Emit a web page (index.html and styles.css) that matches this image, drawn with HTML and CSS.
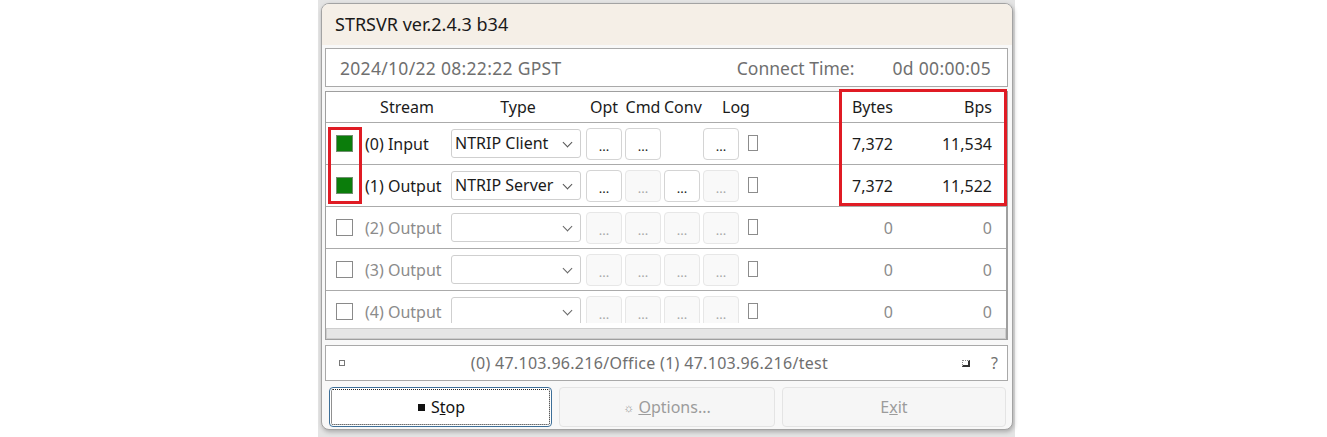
FILE: index.html
```html
<!DOCTYPE html>
<html>

<head>
    <title>STRSVR</title>
    <link rel="stylesheet" href="styles.css">
</head>

<body>
    <div class="desk">
        <div class="win">
            <div class="titlebar">STRSVR ver.2.4.3 b34</div>

            <div class="content">
                <div class="panel time-panel">
                    <span class="time">2024/10/22 08:22:22 GPST</span>
                    <span class="conn-label">Connect Time:</span>
                    <span class="conn-value">0d 00:00:05</span>
                </div>

                <div class="streams">
                    <div class="rows">
                        <div class="row head">
                            <span></span>
                            <span class="h-stream">Stream</span>
                            <span class="h-type">Type</span>
                            <span class="h-btn">Opt</span>
                            <span class="h-btn">Cmd</span>
                            <span class="h-btn">Conv</span>
                            <span class="h-log">Log</span>
                            <span></span>
                            <span class="num">Bytes</span>
                            <span class="num">Bps</span>
                        </div>

                        <div class="row">
                            <span class="chk on"></span>
                            <span class="label">(0) Input</span>
                            <div class="sel">NTRIP Client<i class="chev"></i></div>
                            <button class="dots">...</button>
                            <button class="dots">...</button>
                            <span></span>
                            <button class="dots">...</button>
                            <span class="logbox"></span>
                            <span class="num">7,372</span>
                            <span class="num">11,534</span>
                        </div>

                        <div class="row">
                            <span class="chk on"></span>
                            <span class="label">(1) Output</span>
                            <div class="sel">NTRIP Server<i class="chev"></i></div>
                            <button class="dots">...</button>
                            <button class="dots" disabled>...</button>
                            <button class="dots">...</button>
                            <button class="dots" disabled>...</button>
                            <span class="logbox"></span>
                            <span class="num">7,372</span>
                            <span class="num">11,522</span>
                        </div>

                        <div class="row off">
                            <span class="chk"></span>
                            <span class="label">(2) Output</span>
                            <div class="sel"><i class="chev"></i></div>
                            <button class="dots" disabled>...</button>
                            <button class="dots" disabled>...</button>
                            <button class="dots" disabled>...</button>
                            <button class="dots" disabled>...</button>
                            <span class="logbox"></span>
                            <span class="num">0</span>
                            <span class="num">0</span>
                        </div>

                        <div class="row off">
                            <span class="chk"></span>
                            <span class="label">(3) Output</span>
                            <div class="sel"><i class="chev"></i></div>
                            <button class="dots" disabled>...</button>
                            <button class="dots" disabled>...</button>
                            <button class="dots" disabled>...</button>
                            <button class="dots" disabled>...</button>
                            <span class="logbox"></span>
                            <span class="num">0</span>
                            <span class="num">0</span>
                        </div>

                        <div class="row off">
                            <span class="chk"></span>
                            <span class="label">(4) Output</span>
                            <div class="sel"><i class="chev"></i></div>
                            <button class="dots" disabled>...</button>
                            <button class="dots" disabled>...</button>
                            <button class="dots" disabled>...</button>
                            <button class="dots" disabled>...</button>
                            <span class="logbox"></span>
                            <span class="num">0</span>
                            <span class="num">0</span>
                        </div>
                    </div>
                    <div class="hscroll"></div>
                </div>

                <div class="panel status-panel">
                    <div class="st-left"><span class="tiny-box"></span></div>
                    <div class="st-text">(0) 47.103.96.216/Office (1) 47.103.96.216/test</div>
                    <div class="st-right">
                        <span class="dot-box"></span>
                        <span class="help">?</span>
                    </div>
                </div>

                <div class="buttons">
                    <button class="big focus"><span class="stop-ico"></span>S<u>t</u>op</button>
                    <button class="big" disabled><span class="opt-ico">&#9788;</span> <u>O</u>ptions...</button>
                    <button class="big" disabled>E<u>x</u>it</button>
                </div>
            </div>

            <!-- red highlight frames -->
            <div class="mark mark-check"></div>
            <div class="mark mark-bytes"></div>
        </div>
    </div>
</body>

</html>
```

FILE: styles.css
```css
body {
    margin: 0;
    padding: 0;
    background-color: white;
    font-family: "Noto Sans", "Open Sans", sans-serif;
    font-size: 16px;
    color: #1b1b1b;
}

.desk {
    margin-left: 318px;
    width: 697px;
    height: 437px;
    padding: 3px 2px 0 3px;
    box-sizing: border-box;
    background-color: #e4e4e4;
}

.win {
    position: relative;
    width: 692px;
    height: 427px;
    box-sizing: border-box;
    border: 1px solid #a3a3a3;
    border-radius: 8px;
    background-color: #f8f8f8;
    overflow: hidden;
    box-shadow: 1px 2px 4px rgba(0, 0, 0, 0.25);
}

.titlebar {
    height: 41px;
    line-height: 41px;
    padding-left: 13px;
    background-color: #f5efe7;
    font-size: 18px;
    color: #1a1a1a;
}

.content {
    padding: 3px 4px 0 3px;
}

.panel {
    background-color: white;
    border: 1px solid #a9a9a9;
    box-sizing: border-box;
    color: #6f6f6f;
}

.time-panel {
    height: 39px;
    display: flex;
    align-items: center;
    padding: 0 16px 0 14px;
    font-size: 17.5px;
}

.time {
    flex: 1;
    letter-spacing: 0.3px;
}

.conn-value {
    margin-left: 38px;
    letter-spacing: 0.35px;
}

/* stream table */
.streams {
    margin-top: 4px;
    height: 249px;
    box-sizing: border-box;
    border: 1px solid #9f9f9f;
    border-right-width: 2px;
    background-color: white;
}

.rows {
    height: 231px;
    overflow: hidden;
}

.row {
    display: grid;
    grid-template-columns: 37px 88px 135px 39px 39px 39px 45px 52px 93px 99px;
    align-items: center;
    height: 41px;
    border-bottom: 1px solid #ababab;
}

.row.head {
    height: 30px;
}

.h-stream {
    text-align: center;
}

.h-type {
    width: 130px;
    text-align: center;
    padding-left: 2px;
}

.h-btn {
    width: 36px;
    text-align: center;
}

.h-log {
    padding-left: 19px;
}

.num {
    text-align: right;
}

.chk {
    width: 17px;
    height: 17px;
    margin-left: 10px;
    box-sizing: border-box;
    border: 1px solid #8a8a8a;
    background-color: white;
}

.chk.on {
    border-color: #6f8f6f;
    background-color: #0b7d0b;
}

.label {
    padding-left: 2px;
    white-space: nowrap;
}

.sel {
    position: relative;
    width: 130px;
    height: 29px;
    box-sizing: border-box;
    border: 1px solid #cfcfcf;
    border-radius: 3px;
    padding-left: 3px;
    line-height: 26px;
    background-color: white;
    white-space: nowrap;
}

.chev {
    position: absolute;
    right: 9px;
    top: 9px;
    width: 6px;
    height: 6px;
    border-right: 1px solid #555;
    border-bottom: 1px solid #555;
    transform: rotate(45deg);
}

.dots {
    width: 36px;
    height: 32px;
    padding: 4px 0 0 0;
    box-sizing: border-box;
    border: 1px solid #d4d4d4;
    border-radius: 4px;
    background-color: white;
    font-family: "Noto Sans", sans-serif;
    font-size: 13px;
    color: #1b1b1b;
}

.dots:disabled {
    background-color: #f9f9f9;
    border-color: #e7e7e7;
    color: #a8a8a8;
}

.logbox {
    width: 10px;
    height: 16px;
    box-sizing: border-box;
    border: 1px solid #8c8c8c;
    margin-top: -2px;
}

.row.off {
    color: #8b8b8b;
}

.row.off .chev {
    border-color: #666;
}

.hscroll {
    margin-top: 5px;
    height: 11px;
    box-sizing: border-box;
    background-color: #e6e6e6;
    border: 1px solid #cdcdcd;
}

/* status */
.status-panel {
    margin-top: 5px;
    height: 36px;
    display: flex;
    align-items: center;
}

.st-left {
    width: 40px;
    padding-left: 13px;
    box-sizing: border-box;
}

.tiny-box {
    display: block;
    width: 6px;
    height: 6px;
    border: 1px solid #777;
    box-sizing: border-box;
}

.st-text {
    flex: 1;
    text-align: center;
    white-space: nowrap;
    letter-spacing: 0.3px;
}

.st-right {
    width: 74px;
    display: flex;
    align-items: center;
    padding-left: 29px;
    box-sizing: border-box;
}

.dot-box {
    width: 8px;
    height: 7px;
    border: 1px dotted #888;
    border-right: 2px solid #333;
    border-bottom: 2px solid #333;
    box-sizing: border-box;
}

.help {
    margin-left: 21px;
    color: #707070;
}

/* bottom buttons */
.buttons {
    margin: 6px 0 0 4px;
    display: grid;
    grid-template-columns: 223px 216px 224px;
    column-gap: 7px;
}

.big {
    height: 40px;
    border: 1px solid #e4e4e4;
    border-radius: 4px;
    background-color: #f6f6f6;
    font-family: "Noto Sans", sans-serif;
    font-size: 16px;
    color: #9c9c9c;
}

.big.focus {
    background-color: white;
    border-color: #3d6f98;
    color: #111;
    outline: 1px dotted #222;
    outline-offset: -3px;
    padding-left: 8px;
}

.stop-ico {
    display: inline-block;
    width: 7px;
    height: 7px;
    margin-right: 6px;
    background-color: #111;
    vertical-align: 2px;
}

.opt-ico {
    font-size: 12px;
    vertical-align: 1px;
}

.mark {
    position: absolute;
    border: 3px solid #e01b24;
    box-sizing: border-box;
}

.mark-check {
    left: 6px;
    top: 123px;
    width: 34px;
    height: 77px;
}

.mark-bytes {
    left: 517px;
    top: 85px;
    width: 168px;
    height: 117px;
}
```
